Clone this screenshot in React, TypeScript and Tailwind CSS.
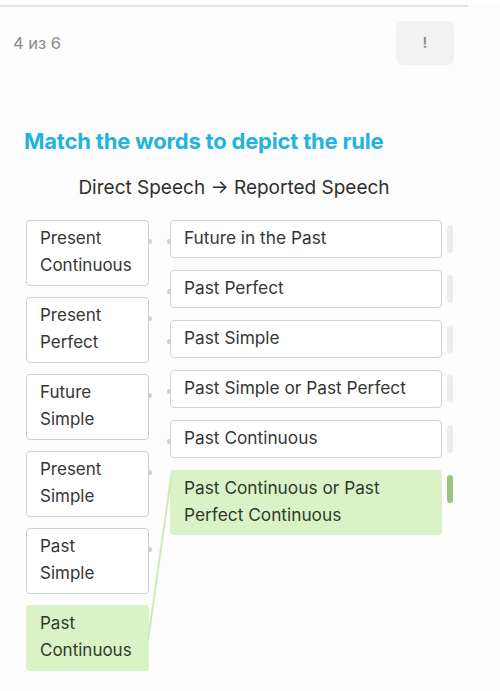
import React from "react";

const leftItems = [
  { l1: "Present", l2: "Continuous" },
  { l1: "Present", l2: "Perfect" },
  { l1: "Future", l2: "Simple" },
  { l1: "Present", l2: "Simple" },
  { l1: "Past", l2: "Simple" },
];

const rightItems = [
  "Future in the Past",
  "Past Perfect",
  "Past Simple",
  "Past Simple or Past Perfect",
  "Past Continuous",
];

export default function App() {
  return (
    <div
      className="relative w-[500px] h-[691px] bg-[#fdfdfd] overflow-hidden"
      style={{ fontFamily: "Inter, 'Noto Sans', sans-serif" }}
    >
      <div className="h-[5px] w-full bg-white" />
      <div className="h-[2px] w-[468px] bg-[#e4e4e4]" />

      <div className="flex items-center justify-between pl-[13px] pr-[46px] pt-[14px]">
        <span className="text-[16.5px] text-[#8a8a8a]">4 из 6</span>
        <div className="w-[58px] h-[44px] rounded-[7px] bg-[#f2f2f3] flex items-center justify-center text-[15px] font-semibold text-[#8d8d8d]">
          !
        </div>
      </div>

      <h1 className="mt-[62px] pl-[24px] text-[22px] leading-[28px] font-bold text-[#22b3e0] tracking-[-0.2px]">
        Match the words to depict the rule
      </h1>

      <div className="mt-[21px] w-[468px] text-center text-[19px] leading-[24px] text-[#2e2e2e]">
        Direct Speech → Reported Speech
      </div>

      <div className="mt-[20px] flex pl-[26px] gap-[21px]">
        <div className="flex flex-col gap-[11px] w-[123px]">
          {leftItems.map((it, i) => (
            <div
              key={i}
              className="relative h-[66px] rounded-[4px] border border-[#cfcfd3] bg-white pl-[13px] pt-[4px] text-[17px] leading-[27px] text-[#363636]"
            >
              <div>{it.l1}</div>
              <div>{it.l2}</div>
              <span className="absolute -right-[4px] top-[18px] w-[3px] h-[5px] rounded-r-full bg-[#d0d0d0]" />
            </div>
          ))}
          <div className="relative h-[66px] rounded-[4px] bg-[#d9f3c6] pl-[14px] pt-[5px] text-[17px] leading-[27px] text-[#2f3a2b]">
            <div>Past</div>
            <div>Continuous</div>
          </div>
        </div>

        <div className="flex flex-col gap-[12px]">
          {rightItems.map((t, i) => (
            <div key={i} className="flex gap-[5px]">
              <div className="relative h-[38px] w-[272px] rounded-[4px] border border-[#d3d3d6] bg-white pl-[13px] pb-[2px] flex items-center text-[17.3px] text-[#363636]">
                {t}
                <span className="absolute -left-[4px] top-[18px] w-[3px] h-[5px] rounded-l-full bg-[#d0d0d0]" />
              </div>
              <div className="mt-[5px] w-[6px] h-[28px] rounded-full bg-[#ececec]" />
            </div>
          ))}
          <div className="flex gap-[5px]">
            <div className="h-[65px] w-[272px] rounded-[4px] bg-[#d9f3c6] pl-[14px] pt-[4px] text-[17.3px] leading-[27px] text-[#2f3a2b]">
              <div>Past Continuous or Past</div>
              <div>Perfect Continuous</div>
            </div>
            <div className="mt-[5px] w-[6px] h-[28px] rounded-full bg-[#9cc57c]" />
          </div>
        </div>
      </div>

      <svg className="absolute left-0 top-0 pointer-events-none" width="500" height="691">
        <line x1="171" y1="478" x2="148" y2="640" stroke="#cdeab5" strokeWidth="2" />
      </svg>
    </div>
  );
}
